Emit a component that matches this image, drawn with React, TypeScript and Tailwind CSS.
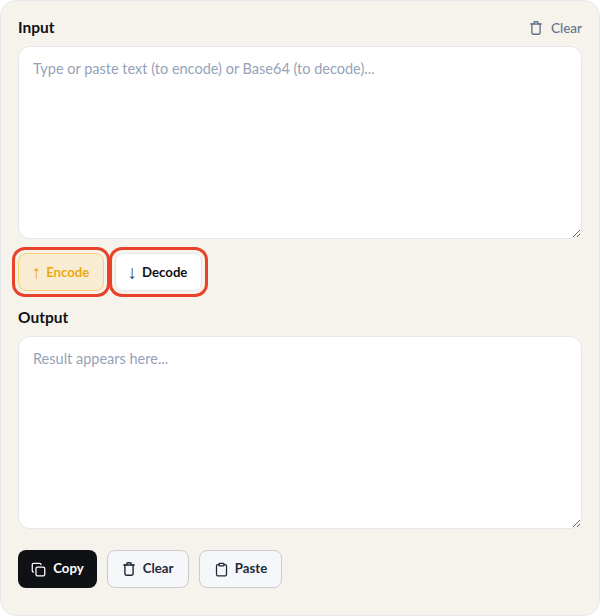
import { Copy, Clipboard } from "lucide-react";

function TrashIcon({ className }: { className?: string }) {
  return (
    <svg className={className} width="12" height="14" viewBox="0 0 12 14" fill="none" stroke="currentColor" strokeWidth="1.4" strokeLinecap="round" strokeLinejoin="round">
      <path d="M0.8 3h10.4" />
      <path d="M1.9 3v8.7a1.5 1.5 0 0 0 1.5 1.5h5.2a1.5 1.5 0 0 0 1.5-1.5V3" />
      <path d="M3.8 3V1.8a1 1 0 0 1 1-1h2.4a1 1 0 0 1 1 1V3" />
    </svg>
  );
}

export default function App() {
  const font = "font-['Lato','Noto_Sans',sans-serif]";
  return (
    <div className={`w-[600px] h-[616px] bg-[#f6f3ed] border border-[#e5e7eb] rounded-2xl px-[17px] pt-[17px] flex flex-col ${font}`}>
      <div className="flex items-center justify-between h-[20px]">
        <span className="text-[15.5px] font-bold text-[#0f1115]">Input</span>
        <button className="flex items-center gap-[9px] text-[13.5px] font-medium text-[#64748b]">
          <TrashIcon />
          Clear
        </button>
      </div>
      <textarea
        className="mt-[8px] w-[564px] h-[193px] bg-white border border-[#e5e7eb] rounded-xl px-[14px] py-[12px] text-[14.5px] leading-[20px] outline-none placeholder:text-[#94a3b8]"
        placeholder="Type or paste text (to encode) or Base64 (to decode)..."
      />
      <div className="mt-[14px] flex gap-[11px] h-[38px]">
        <div className="relative">
          <button className="w-[86px] h-[38px] pt-[1px] pr-[1px] flex items-center justify-center gap-[5px] bg-[#f8edd3] border border-[#fbd071] rounded-lg text-[13.2px] font-bold text-[#eaa90d]">
            <span className="text-[19px] font-normal leading-none font-['Liberation_Sans',sans-serif]">↑</span>
            Encode
          </button>
          <div className="absolute -inset-[6px] border-[3px] border-[#ea4228] rounded-[13px]" />
        </div>
        <div className="relative">
          <button className="w-[87px] h-[38px] pt-[1px] pr-[2px] flex items-center justify-center gap-[5px] bg-white border border-[#e5e7eb] rounded-lg text-[13.2px] font-bold text-[#0f1115]">
            <span className="text-[19px] font-normal leading-none text-[#334155] font-['Liberation_Sans',sans-serif]">↓</span>
            Decode
          </button>
          <div className="absolute -inset-[6px] border-[3px] border-[#ea4228] rounded-[13px]" />
        </div>
      </div>
      <div className="mt-[16px] h-[20px] leading-[20px] text-[15.5px] font-bold text-[#0f1115]">Output</div>
      <textarea
        className="mt-[9px] w-[564px] h-[193px] bg-white border border-[#e5e7eb] rounded-xl px-[14px] py-[12px] text-[14.5px] leading-[20px] outline-none placeholder:text-[#94a3b8]"
        placeholder="Result appears here..."
      />
      <div className="mt-[21px] flex gap-[10px]">
        <button className="w-[79px] h-[38px] flex items-center justify-center gap-[7px] bg-[#0f1115] rounded-lg text-[13.2px] font-bold text-white">
          <Copy size={15} />
          Copy
        </button>
        <button className="w-[82px] h-[38px] flex items-center justify-center gap-[8px] bg-[#f5f7fa] border border-[#cccccc] rounded-lg text-[13.2px] font-bold text-[#1f2937]">
          <TrashIcon />
          Clear
        </button>
        <button className="w-[83px] h-[38px] flex items-center justify-center gap-[6px] bg-[#f5f7fa] border border-[#cccccc] rounded-lg text-[13.2px] font-bold text-[#1f2937]">
          <Clipboard size={15} />
          Paste
        </button>
      </div>
    </div>
  );
}
